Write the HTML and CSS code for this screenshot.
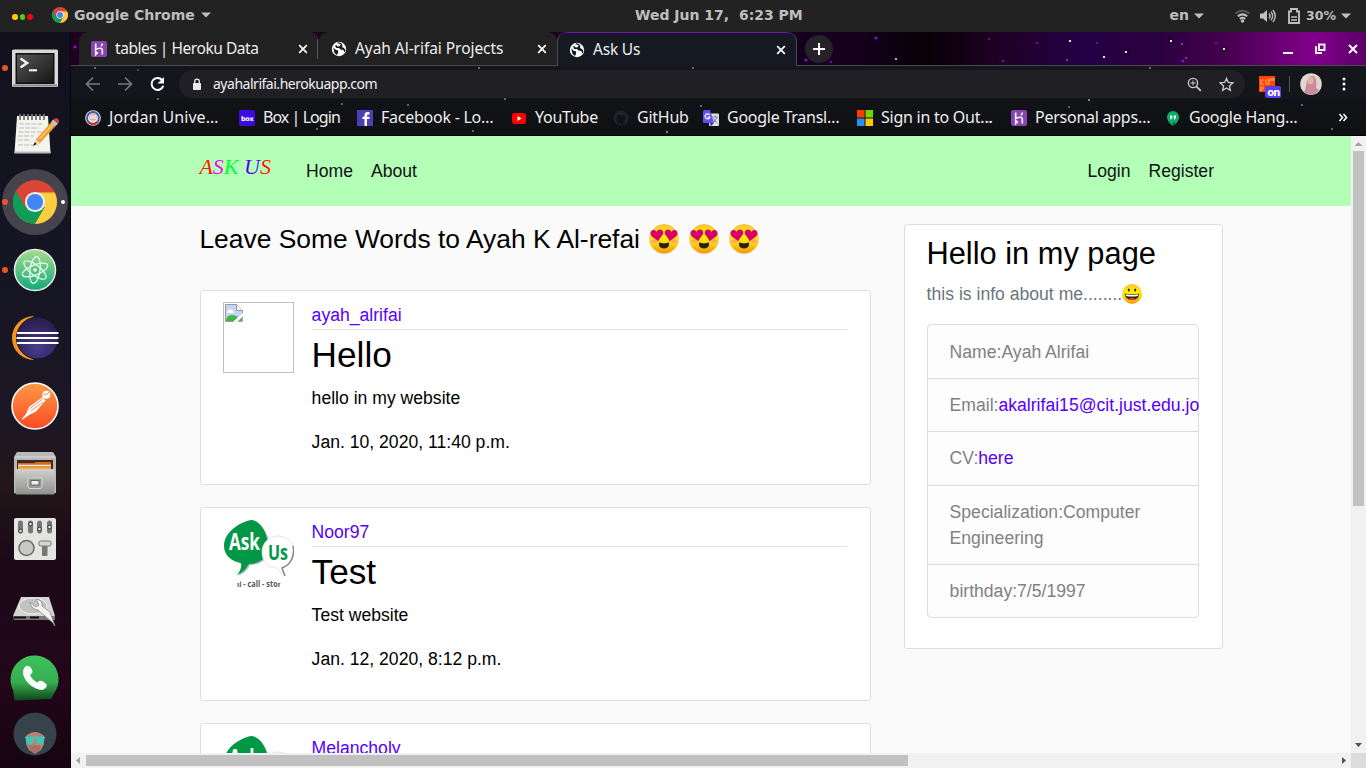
FILE: index.html
```html
<!DOCTYPE html>
<html lang="en">
<head>
<meta charset="utf-8">
<title>Ask Us</title>
<link rel="stylesheet" href="styles.css">
</head>
<body>
<svg class="defs" width="0" height="0" aria-hidden="true">
  <defs>
    <linearGradient id="g-face" x1="0" y1="0" x2="0" y2="1"><stop offset="0" stop-color="#fbc82a"/><stop offset=".4" stop-color="#fff000"/><stop offset=".65" stop-color="#fdd60a"/><stop offset="1" stop-color="#f49410"/></linearGradient>
    <linearGradient id="g-metal" x1="0" y1="0" x2="0" y2="1"><stop offset="0" stop-color="#d0d0ce"/><stop offset="1" stop-color="#8f8f8d"/></linearGradient>
    <linearGradient id="g-screen" x1="0" y1="0" x2="1" y2="1"><stop offset="0" stop-color="#575757"/><stop offset="1" stop-color="#151515"/></linearGradient>
    <linearGradient id="g-atom" x1="0" y1="0" x2="0" y2="1"><stop offset="0" stop-color="#a9dc8f"/><stop offset="1" stop-color="#12a87a"/></linearGradient>
    <linearGradient id="g-post" x1="0" y1="0" x2="0" y2="1"><stop offset="0" stop-color="#ff9a45"/><stop offset="1" stop-color="#fb4a25"/></linearGradient>
    <linearGradient id="g-phone" x1="0" y1="0" x2="0" y2="1"><stop offset="0" stop-color="#3fc25c"/><stop offset=".6" stop-color="#35ad50"/><stop offset="1" stop-color="#10451c"/></linearGradient>
    <radialGradient id="g-ecl" cx=".5" cy=".7" r=".6"><stop offset="0" stop-color="#4b3d91"/><stop offset="1" stop-color="#2a2052"/></radialGradient>
    <symbol id="chrome" viewBox="0 0 48 48">
      <circle cx="24" cy="24" r="24" fill="#db4437"/>
      <path d="M3.200 12 13.600 30 24 24l10.400 6L24 48A24 24 0 0 1 3.200 12z" fill="#0f9d58"/>
      <path d="M24 13.500h21.500A24 24 0 0 1 24 48l10.400-18z" fill="#ffcd40"/>
      <circle cx="24" cy="24" r="11" fill="#f1f1f1"/><circle cx="24" cy="24" r="8.800" fill="#4285f4"/>
    </symbol>
    <symbol id="globe" viewBox="0 0 16 16">
      <circle cx="8" cy="8" r="7.200" fill="#fff"/>
      <path d="M2.200 6.500 5 9l2 .3.200 2.200L6 14 3.500 12zM7 1l-.8 2.600-2 1L5 7h3l1.500 1.500L12 9l1.500 2.400L14.500 9 13 7l-2-1 .5-2L10 2z" fill="#171a20"/>
      <path d="M6.500 2 10 3.500 8 5.600 5.500 5zM9.500 9.500l3.500 0-1 3-2.500 1z" fill="#fff"/>
    </symbol>
    <symbol id="heroku" viewBox="0 0 16 16">
      <rect width="16" height="16" rx="2" fill="#8746ad"/>
      <path d="M4.700 2.500v6Q8 7 10 7.300q1.300.3 1.300 1.800v4.400M11.300 2.500q0 1.500-1.200 2.700M4.700 10.600v3l1.600-1.500z" fill="none" stroke="#eee" stroke-width="1.700"/>
    </symbol>
    <symbol id="close" viewBox="0 0 10 10"><path d="M1.200 1.200l7.600 7.600M8.800 1.200 1.200 8.800" stroke="#fff" stroke-width="1.700"/></symbol>
    <symbol id="down" viewBox="0 0 10 6"><path d="M0 .5h10L5 5.500z" fill="#bebebe"/></symbol>
    <symbol id="hearteyes" viewBox="0 0 30 30">
      <circle cx="15" cy="15" r="14.400" fill="url(#g-face)" stroke="#e8b040" stroke-width=".6"/>
      <ellipse cx="5.500" cy="17" rx="3.200" ry="2" fill="#ffab66"/><ellipse cx="24.500" cy="17" rx="3.200" ry="2" fill="#ffab66"/>
      <path id="hrt" d="M9.300 17.200C5.500 14 1.500 12.700 1.500 9 1.500 5.700 6 5 7.600 8 8.600 4.800 13.800 4.600 14.200 8.300 14.500 11.500 11 13 9.300 17.200z" fill="#d5006c"/>
      <use href="#hrt" transform="matrix(-1 0 0 1 30 0)"/>
      <path d="M10 18.600q5 1.600 10 0 .8 5.900-5 5.900t-5-5.900z" fill="#2b211c"/>
    </symbol>
    <symbol id="askus" viewBox="0 0 71 71">
      <path d="M28 1C17 3 2 13 1.500 27 2 37 10 42 18 44c1 5-1 8-4 12 7-3 10-7 12-11 11 0 20-7 20-17C46 15 37 1 28 1z" fill="#8b8b8b" opacity=".6" transform="translate(1 1)"/>
      <path d="M28 1C17 3 1 13 1 27c0 10 8 15 17 17 1 4-1 8-4 12 7-3 9-7 12-11 11 0 19-7 19-17C45 14 37 1 28 1z" fill="#009846"/>
      <path d="M55 17c9 0 16 7 16 16 0 8-5 14-12 16 0 3 1 5 3 8-4-2-6-5-8-8-9 0-15-7-15-16s7-16 16-16z" fill="#fff" stroke="#ddd" stroke-width=".8"/>
      <path d="M70 27c2 9-2 19-11 22l3 8" fill="none" stroke="#888" stroke-width="1.500"/>
      <text x="6" y="31" textLength="31" lengthAdjust="spacingAndGlyphs" class="logo-word" font-size="23" fill="#fff">Ask</text>
      <text x="45" y="41" textLength="20" lengthAdjust="spacingAndGlyphs" class="logo-word" font-size="22" fill="#009846">Us</text>
      <text x="14" y="68" textLength="44" lengthAdjust="spacingAndGlyphs" class="logo-word" font-size="8.500" fill="#555">ıl - call - stor</text>
      <path d="M10 60h10l-4 4h-6zM60 60H50l4 4h6z" fill="#fff"/>
    </symbol>
  </defs>
</svg>
<div class="desktop">
  <header class="topbar">
    <div class="dots"><i class="dot y"></i><i class="dot g"></i><i class="dot r"></i></div>
    <div class="app"><svg width="16" height="16"><use href="#chrome"/></svg><span>Google Chrome</span><svg width="10" height="6"><use href="#down"/></svg></div>
    <div class="clock">Wed Jun 17,&nbsp; 6:23 PM</div>
    <div class="status">
      <span class="lang">en</span><svg class="lang-arrow" width="10" height="6"><use href="#down"/></svg>
      <svg class="wifi" width="15" height="14" viewBox="0 0 15 14"><g fill="none" stroke="#bebebe" stroke-width="2"><path d="M.5 4.500q7-5.500 14 0" opacity=".35"/><path d="M2.800 7.300q4.700-3.800 9.400 0"/><path d="M4.800 9.900q2.700-2.200 5.400 0"/></g><circle cx="7.500" cy="12" r="1.800" fill="#bebebe"/></svg>
      <svg class="vol" width="16" height="14" viewBox="0 0 16 14"><path d="M0 4.500h3L7 1v12L3 9.500H0z" fill="#bebebe"/><path d="M9 4.500q2 2.500 0 5M11 2.700q3.200 4.300 0 8.600M13 1q4.500 6 0 12" fill="none" stroke="#bebebe" stroke-width="1.400"/></svg>
      <svg class="bat" width="12" height="16" viewBox="0 0 12 16"><path d="M1 3.500h2V1h6v2.500h2V15H1z" fill="none" stroke="#bebebe" stroke-width="1.900"/><path d="M3 9h6M3 12h6" stroke="#bebebe" stroke-width="1.700"/></svg>
      <span class="pct">30%</span><svg width="10" height="6"><use href="#down"/></svg>
    </div>
  </header>
  <div class="work">
    <aside class="dock">
      <div class="slot first"><i class="run"></i><svg width="70" height="68"><rect x="12" y="15.500" width="46" height="37.500" rx="1.500" fill="#d9d9d7"/><path d="M13 51.500h44" stroke="#888" stroke-width="2"/><rect x="15.500" y="19" width="39" height="31" fill="#111"/><rect x="17" y="20.500" width="36" height="28" fill="url(#g-screen)"/><path d="M20.500 24.500l6.500 4.500-6.500 4.500" fill="none" stroke="#eee" stroke-width="2.600"/><path d="M29 36.300h8" stroke="#fff" stroke-width="2"/></svg></div>
      <div class="slot"><svg width="70" height="68"><path d="M17 16h31l2.500 37h-36z" fill="#f4f4ef"/><path d="M14.500 52.500h36" stroke="#bbb" stroke-width="2"/><path d="M20 14v6M24 14v6M28 14v6M32 14v6M36 14v6M40 14v6M44 14v6" stroke="#777" stroke-width="1.800"/><path d="M19 24h24M19 28h20M18.500 32h24M18 36h16M18 40h12M18 45h20" stroke="#bbb" stroke-dasharray="5 1.200"/><path d="M34 45.500l2-6L53 20l4.500 4L40 43z" fill="#f29b2e"/><path d="M36 39.500l4 3.500-6.500 3z" fill="#f5dcae"/><path d="M35 42l1.500 2-3.500 2z" fill="#111"/><path d="M39 39.500 55 22" stroke="#ffce7a" stroke-width="1.300"/><path d="M51 22l2.500-2.500 4.500 4-2.500 2.500z" fill="#b5c4ca"/><path d="M53.500 19.500q3-3 5 0 1.500 2-.5 4z" fill="#d93a43"/></svg></div>
      <div class="slot"><i class="run"></i><svg width="70" height="68"><circle cx="35" cy="34" r="33" fill="#45444d"/><use href="#chrome" x="13" y="12" width="44" height="44"/><circle cx="63" cy="34" r="2" fill="#fff"/></svg></div>
      <div class="slot"><i class="run"></i><svg width="70" height="68"><circle cx="35" cy="34" r="20.500" fill="url(#g-atom)" stroke="#e6eee8" stroke-width="1.500"/><g fill="none" stroke="#e7fff0" stroke-width="1.200"><ellipse cx="35" cy="34" rx="13.500" ry="5" transform="rotate(-22 35 34)"/><ellipse cx="35" cy="34" rx="13.500" ry="5" transform="rotate(38 35 34)"/><ellipse cx="35" cy="34" rx="13.500" ry="5" transform="rotate(98 35 34)"/></g><circle cx="35" cy="34" r="1.800" fill="#e7fff0"/></svg></div>
      <div class="slot"><svg width="70" height="68"><path d="M34 12a22 22 0 1 0 0 44 28 28 0 0 1 0-44z" fill="#f7941e"/><circle cx="37.500" cy="34" r="21" fill="url(#g-ecl)" stroke="#14102c"/><path d="M17 29h41.500M16.500 34h42M17 39h41.500" stroke="#fff" stroke-width="2.200"/></svg></div>
      <div class="slot"><svg width="70" height="68"><circle cx="35" cy="34" r="23" fill="url(#g-post)" stroke="#fff" stroke-width="1.600"/><circle cx="46.300" cy="22.700" r="4" fill="#fff"/><path d="M42.500 25 45.500 28.500 36 39.500l-7 3.500-5 3.500-2 1.500v-1.500L26 42l3-7z" fill="#fff"/><path d="M29.500 37l13-10M31 39l12-9M43 21.500l3 1.500 3-3" stroke="#fb7036" stroke-width=".8" fill="none"/></svg></div>
      <div class="slot"><svg width="70" height="68"><path d="M17 12h36l3 5v36H14V17z" fill="#b9b9b7"/><path d="M15 17h40" stroke="#ddd"/><rect x="17" y="20" width="36" height="12" fill="#3a2a23"/><path d="M18 23h16l2-1h15v10H18z" fill="#d26a1e"/><path d="M18 25.500h33" stroke="#fff3e0" stroke-width="1.500"/><path d="M18 28h33" stroke="#f6a23e" stroke-width="2"/><rect x="15.500" y="29" width="39" height="25.500" rx="1" fill="url(#g-metal)"/><rect x="28" y="38" width="14" height="10.500" rx="2" fill="#999" stroke="#d8d8d8"/><rect x="31" y="40.500" width="8" height="4.500" fill="#eee" stroke="#666"/></svg></div>
      <div class="slot settings"><svg width="70" height="68"><rect x="14" y="12" width="42" height="42" rx="2" fill="#e4e5e1"/><g stroke="#777" stroke-width="5" stroke-linecap="round"><path d="M20.500 17v8M30.500 17v8M39.500 17v8M49.500 17v8"/></g><g fill="#e8e8e8" stroke="#333"><circle cx="20.500" cy="25" r="1.800"/><circle cx="30.500" cy="18" r="1.800"/><circle cx="39.500" cy="23" r="1.800"/><circle cx="49.500" cy="21" r="1.800"/></g><circle cx="26.500" cy="42" r="7.500" fill="#c8c9c5" stroke="#6c6e6a" stroke-width="1.600"/><rect x="42" y="35" width="5.500" height="15" rx="1" fill="#777"/><rect x="39" y="35" width="12" height="5" rx="1.500" fill="#d5d5d2" stroke="#777"/></svg></div>
      <div class="slot"><svg width="70" height="68"><path d="M21 21h28l6 19H13z" fill="#d4d4d2"/><path d="M13 40h42v4H14z" fill="#777"/><path d="M14 41.500h25" stroke="#111" stroke-dasharray="12 4" stroke-width="2"/><ellipse cx="33" cy="30" rx="14" ry="8" fill="#c2c2c0" stroke="#efefef"/><path d="M30 26q2 8 8 8l14 12 3 4-5-14-8-6q1-6-6-7l3 6-3 2z" fill="#f4f4f3" stroke="#888" stroke-width=".8"/></svg></div>
      <div class="slot"><svg width="70" height="68"><path d="M14.500 56.500 13 46a24 24 0 1 1 41 3.500l-3 5.500z" fill="url(#g-phone)"/><path d="M25.500 22.500c2-1.500 4-.5 5.500 1.500 2.500 4 1.500 5-1 7 2 4 4.500 6 7.500 7.500 2-2.500 4-2 7 0 2.500 1.500 3 3 1.500 5-3 4.500-9 2-14.500-1.500-6-4.500-12-14-6-19.500z" fill="#fff"/></svg></div>
      <div class="slot user"><svg width="70" height="44"><circle cx="35" cy="22" r="21.500" fill="#37434a"/><path d="M26 24q9-8 18 0v8l-3 6-6 4-6-4-3-6z" fill="#b58376"/><path d="M29 33q6 1 12 0l-1 5-5 4-5-4z" fill="#a77167"/><path d="M25 25.500h20" stroke="#4ecdbb" stroke-width="1.500"/><path d="M25.500 25H34v3q-1 5-5 4.500-3.500-.5-3.500-7.500zM44.500 25H36v3q1 5 5 4.500 3.500-.5 3.500-7.500z" fill="#3cc8b4"/></svg></div>
    </aside>
    <main class="browser">
      <div class="chrome-ui">
        <svg class="stars" width="1295" height="104" aria-hidden="true">
          <g fill="#7c7c98"><circle cx="24" cy="36" r="1"/><circle cx="134" cy="28" r="1"/><circle cx="67" cy="38" r=".8"/><circle cx="87" cy="67" r="1"/><circle cx="271" cy="72" r="1"/><circle cx="408" cy="36" r="1"/><circle cx="434" cy="67" r="1"/><circle cx="622" cy="36" r="1"/><circle cx="337" cy="73" r="1"/><circle cx="402" cy="99" r="1"/><circle cx="596" cy="100" r="1.200"/><circle cx="630" cy="74" r="1"/><circle cx="1018" cy="68" r="1.200"/><circle cx="1079" cy="36" r="1"/><circle cx="998" cy="75" r="1"/><circle cx="1148" cy="93" r="1.200"/><circle cx="1231" cy="73" r="1"/><circle cx="1261" cy="97" r="1"/><circle cx="918" cy="90" r="1"/><circle cx="246" cy="97" r="1"/></g>
        </svg>
        <div class="tabs">
          <svg class="stars" width="1295" height="33" aria-hidden="true">
            <g fill="#a900e8"><circle cx="4" cy="15" r="1.500"/><circle cx="735" cy="28" r="1.300"/><circle cx="760" cy="30" r="1"/><circle cx="805" cy="6" r="1.300"/><circle cx="932" cy="29" r="1"/><circle cx="966" cy="11" r="1"/><circle cx="1112" cy="29" r="1.300"/></g>
            <g fill="#f0c4ff" stroke="#160018" stroke-width="1.400"><circle cx="825" cy="27" r="1.800"/><circle cx="999" cy="9" r="2"/><circle cx="1033" cy="25" r="2"/><circle cx="1055" cy="20" r="2"/><circle cx="1100" cy="9" r="2"/><circle cx="1153" cy="17" r="2"/></g>
            <g fill="#c33aac"><circle cx="918" cy="7" r=".8"/><circle cx="996" cy="28" r="1"/><circle cx="1026" cy="11" r=".8"/><circle cx="1111" cy="12" r="1"/><circle cx="1115" cy="26" r="1"/><circle cx="1145" cy="11" r=".8"/></g>
          </svg>
          <div class="tab"><svg width="16" height="16"><use href="#heroku"/></svg><span class="t1">tables | Heroku Data</span><svg class="x" width="10" height="10"><use href="#close"/></svg></div>
          <div class="tab second"><svg width="16" height="16"><use href="#globe"/></svg><span class="t2">Ayah Al-rifai Projects</span><svg class="x" width="10" height="10"><use href="#close"/></svg></div>
          <div class="tab active"><svg width="16" height="16"><use href="#globe"/></svg><span class="t3">Ask Us</span><svg class="x" width="10" height="10"><use href="#close"/></svg></div>
          <div class="newtab"><svg width="28" height="28"><circle cx="14" cy="14" r="14" fill="#252329"/><path d="M14 8v12M8 14h12" stroke="#fff" stroke-width="2"/></svg></div>
          <div class="wm"><svg width="90" height="34"><path d="M2 21h10" stroke="#fff" stroke-width="2"/><path d="M38 12.500h5.500v5.500H38zM35 14v7h6" fill="none" stroke="#eee" stroke-width="2"/><path d="M68 13l8 8M76 13l-8 8" stroke="#fff" stroke-width="2"/></svg></div>
        </div>
        <div class="toolbar">
          <svg class="nav" width="86" height="28"><g fill="none" stroke="#77797c" stroke-width="1.700"><path d="M15 14H2M8 7.500 1.500 14 8 20.500M33 14h13M40 7.500l6.500 6.500-6.500 6.500"/></g><path d="M77 9.800a6 6 0 1 0 1.300 6" fill="none" stroke="#fff" stroke-width="2"/><path d="M79 7v6.500h-6.500z" fill="#fff"/></svg>
          <div class="omni">
            <svg width="10" height="13" viewBox="0 0 10 13"><rect x="1" y="5" width="8" height="7" rx=".8" fill="#e8eaed"/><path d="M2.700 5V3.500a2.300 2.300 0 0 1 4.600 0V5" fill="none" stroke="#e8eaed" stroke-width="1.300"/></svg>
            <span class="url">ayahalrifai.herokuapp.com</span>
            <svg class="mag" width="15" height="15" viewBox="0 0 15 15"><circle cx="6" cy="6" r="4.600" fill="none" stroke="#c9cbce" stroke-width="1.400"/><path d="M9.300 9.300l4.500 4.500" stroke="#c9cbce" stroke-width="1.800"/><path d="M3.500 6h5M6 3.500v5" stroke="#c9cbce"/></svg>
            <svg width="15" height="15" viewBox="0 0 15 15"><path d="M7.500 1.400 9.300 5.500l4.500.4-3.400 3 1 4.400-3.900-2.300-3.900 2.300 1-4.400-3.400-3 4.500-.4z" fill="none" stroke="#c9cbce" stroke-width="1.300"/></svg>
          </div>
          <div class="ext"><svg width="23" height="24"><rect width="16" height="16" fill="#ff4500"/><path d="M5 4H2v4h3M7 4h3v4H7zM11 2v3M13 2v3M15 2v3M2 15v-4h3M2 13h3" fill="none" stroke="#ffa05c" stroke-width="1.200"/><rect x="6" y="10" width="16" height="12" rx="2" fill="#5b3cf4"/><text x="8.300" y="19.500" class="badge">on</text></svg></div>
          <i class="sep"></i>
          <svg class="ava" width="22" height="22"><circle cx="11" cy="11" r="10.800" fill="#ddd7cd"/><path d="M4 19c3-3 1-13 7-16 6-1 6 8 5 12l3 2q-3 4-8 4.800-5 0-7-2.800z" fill="#c98c9d"/><ellipse cx="10.500" cy="7.500" rx="3" ry="3.700" fill="#e5b4a5"/></svg>
          <svg class="more" width="4" height="14"><circle cx="2" cy="2" r="1.500" fill="#fff"/><circle cx="2" cy="7" r="1.500" fill="#fff"/><circle cx="2" cy="12" r="1.500" fill="#fff"/></svg>
        </div>
        <div class="bookmarks">
          <div class="bm w154"><svg width="16" height="16"><circle cx="8" cy="8" r="7.800" fill="#e4e6ee"/><circle cx="8" cy="8" r="6" fill="none" stroke="#365ca8" stroke-width="1.800"/><circle cx="8" cy="7" r="3.800" fill="#e9a49b"/><path d="M5 6h6M5 8h6" stroke="#fff"/><path d="M3 12q5 4 10 0" stroke="#c33" stroke-width="2" fill="none"/></svg><span class="wide">Jordan Unive…</span></div>
          <div class="bm w118"><svg width="16" height="16"><rect width="16" height="16" rx="1.500" fill="#3b0be0"/><text x="2" y="10.500" class="boxlogo">box</text></svg><span class="tight">Box | Login</span></div>
          <div class="bm w154"><svg width="16" height="16"><rect width="16" height="16" fill="#4b3fb5"/><path d="M10 16V9h2.500V6.800H10V5.500q0-1.200 2.500-1V2.200Q7.500 1.400 7.500 5v1.800H5.500V9h2v7z" fill="#fff"/></svg><span>Facebook - Lo…</span></div>
          <div class="bm w102"><svg width="16" height="16"><rect x="1" y="3" width="14" height="11" rx="2.500" fill="#f00"/><path d="M6.500 6v5l4-2.500z" fill="#fff"/></svg><span>YouTube</span></div>
          <div class="bm w90"><svg width="16" height="16"><circle cx="8" cy="8" r="7.500" fill="#20232b"/><path d="M6 15.500v-3q-2 0-2.500-1.500M10 15.500v-3q2.500-1 2.500-4 0-1.500-.8-2.300L11.500 4 9.500 5h-3l-2-1-.2 2.200Q3.500 7 3.500 8.500q0 3 2.500 4z" fill="#111318"/></svg><span>GitHub</span></div>
          <div class="bm w154"><svg width="16" height="16"><rect x="6" y="3.500" width="10" height="12.500" rx="1" fill="#dfe1e6"/><path d="M9 7h6M12 5.500V7M14 7q-1 4-4 6M10.500 8.500q1 3 4 4.500" stroke="#789" fill="none"/><path d="M0 1.500Q0 0 1.500 0H7l4 13H1.500Q0 13 0 11.500z" fill="#5f4fee"/><path d="M11 13l-3 3-1-3z" fill="#3a24a8"/><path d="M6.700 5A2.500 2.500 0 1 0 7 7H4.500" stroke="#fff" fill="none" stroke-width="1.200"/></svg><span>Google Transl…</span></div>
          <div class="bm w154"><svg width="16" height="16"><path d="M0 0h7.500v7.500H0z" fill="#ff3d00"/><path d="M8.500 0H16v7.500H8.500z" fill="#76d600"/><path d="M0 8.500h7.500V16H0z" fill="#2a8df5"/><path d="M8.500 8.500H16V16H8.500z" fill="#ffc800"/></svg><span>Sign in to Out…</span></div>
          <div class="bm w154"><svg width="16" height="16"><use href="#heroku"/></svg><span>Personal apps…</span></div>
          <div class="bm w154"><svg width="16" height="16"><path d="M8 1a6 6 0 0 1 0 12v3q-6-4-6-9a6 6 0 0 1 6-6z" fill="#0cac6b"/><path d="M10 12.500 14 7q0 5-6 9z" fill="#0cac6b"/><path d="M5 5.500h2.300V8L6 9.500H5L5.700 8H5zM8.700 5.500H11V8L9.700 9.500h-1L9.400 8h-.7z" fill="#eafff5"/></svg><span>Google Hang…</span></div>
          <svg class="chev" width="10" height="9"><path d="M1.500 1 4.500 4.500l-3 3.500M5.500 1l3 3.500-3 3.500" fill="none" stroke="#fff" stroke-width="1.600"/></svg>
        </div>
      </div>
      <div class="view">
        <div class="page">
          <nav class="site-nav">
            <a class="brand"><b class="c1">A</b><b class="c2">S</b><b class="c3">K</b> <b class="c4">U</b><b class="c1">S</b></a>
            <a class="link">Home</a><a class="link">About</a>
            <a class="link right">Login</a><a class="link">Register</a>
          </nav>
          <div class="cols">
            <section class="posts">
              <h1>Leave Some Words to Ayah K Al-refai <svg class="em e1" width="30" height="30"><use href="#hearteyes"/></svg><svg class="em" width="30" height="30"><use href="#hearteyes"/></svg><svg class="em" width="30" height="30"><use href="#hearteyes"/></svg></h1>
              <article>
                <div class="pic broken"><svg width="18" height="18" viewBox="0 0 18 18"><path d="M.5.500h11l6 6v5L11 17.500H.5z" fill="#c5d5f7" stroke="#999"/><path d="M11.500.500v6h6" fill="#fff" stroke="#999"/><path d="M2 8q2-4 5-2 2 1 2 3H2z" fill="#fff"/><path d="M1 17q0-6 6-6 3 0 6 2l-4 4z" fill="#42b53e"/><path d="M8 18 18 9v3l-6 6z" fill="#fff"/><path d="M13 17.500h4.500V13z" fill="#42b53e" stroke="#999" stroke-width=".6"/></svg></div>
                <div class="body"><div class="meta"><a>ayah_alrifai</a></div><h2>Hello</h2><p>hello in my website</p><p>Jan. 10, 2020, 11:40 p.m.</p></div>
              </article>
              <article>
                <svg class="pic" width="71" height="71"><use href="#askus"/></svg>
                <div class="body"><div class="meta"><a>Noor97</a></div><h2>Test</h2><p>Test website</p><p>Jan. 12, 2020, 8:12 p.m.</p></div>
              </article>
              <article>
                <svg class="pic" width="71" height="71"><use href="#askus"/></svg>
                <div class="body"><div class="meta"><a>Melancholy</a></div></div>
              </article>
            </section>
            <aside class="info">
              <h3>Hello in my page</h3>
              <p class="muted">this is info about me........<svg class="grin" width="20" height="20" viewBox="0 0 20 20"><circle cx="10" cy="10" r="9.700" fill="url(#g-face)" stroke="#e8b82b" stroke-width=".5"/><ellipse cx="6.800" cy="6" rx="1" ry="1.600" fill="#30210f"/><ellipse cx="13.200" cy="6" rx="1" ry="1.600" fill="#30210f"/><path d="M2.800 9.500q7.200 2 14.400 0Q17 16 10 16T2.800 9.500z" fill="#30210f"/><path d="M3.500 10.200q6.500 1.600 13 0l-.6 1.700q-5.900 1.200-11.800 0z" fill="#fff"/><path d="M6.500 15q3.500-2 7 0-3.500 1.700-7 0z" fill="#f04444"/></svg></p>
              <ul>
                <li>Name:Ayah Alrifai</li>
                <li>Email:<a>akalrifai15@cit.just.edu.jo</a></li>
                <li>CV:<a>here</a></li>
                <li>Specialization:Computer Engineering</li>
                <li>birthday:7/5/1997</li>
              </ul>
            </aside>
          </div>
        </div>
        <div class="vbar"><svg width="15" height="15"><path d="M3.500 10h8l-4-4z" fill="#a3a3a3"/></svg><i></i><svg class="end" width="15" height="15"><path d="M4 5h7l-3.500 4z" fill="#505050"/></svg></div>
        <div class="hbar"><svg width="15" height="15"><path d="M9 4v7L5 7.500z" fill="#a3a3a3"/></svg><i></i><svg class="end" width="15" height="15"><path d="M6 4v7l4-3.500z" fill="#505050"/></svg></div>
        <div class="corner"></div>
      </div>
    </main>
  </div>
</div>
</body>
</html>
```
FILE: styles.css
```css
* { box-sizing: border-box; }
body { margin: 0; overflow: hidden; font-family: "Liberation Sans", Arial, sans-serif; }
svg { display: block; flex: none; }
.defs { position: absolute; }
.desktop { width: 1366px; height: 768px; display: flex; flex-direction: column; overflow: hidden; background: #111; }

.topbar { height: 32px; flex: none; background: #222; color: #bebebe; display: grid; grid-template-columns: 52px 583px auto 1fr; align-items: center; font: bold 14px "DejaVu Sans", sans-serif; padding-bottom: 2px; }
.dots { display: flex; gap: 2px; padding: 4px 0 0 12px; }
.dot { width: 5.500px; height: 5.500px; border-radius: 50%; }
.dot.y { background: #fc0; } .dot.g { background: #4fd000; } .dot.r { background: #f00; }
.app { display: flex; align-items: center; gap: 6px; white-space: nowrap; }
.clock { white-space: nowrap; }
.status { display: flex; align-items: center; justify-content: flex-end; padding-right: 15px; }
.status svg { margin-top: 1px; }
.status .lang-arrow { margin: 1px 31px 0 5px; }
.status .vol { margin: 1px 12px 0 10px; }
.pct { font-size: 12.500px; margin: 1px 5px 0 6px; }

.work { flex: 1; display: flex; min-height: 0; }
.dock { width: 71px; flex: none; padding-top: 2px; background: linear-gradient(#12101c 0, #151523 220px, #1c1724 390px, #221619 450px, #1b0917 530px, #22061a 650px, #160410 100%); border-right: 1px solid #08060c; }
.slot { height: 68px; position: relative; }
.slot.first { height: 66px; }
.slot.settings { height: 66px; margin: -2px 0 4px; }
.slot.user { height: 44px; }
.run { position: absolute; left: 2px; top: 31px; width: 6px; height: 6px; border-radius: 50%; background: #e95420; z-index: 1; }

.browser { flex: 1; display: flex; flex-direction: column; min-width: 0; }
.chrome-ui { height: 104px; flex: none; position: relative; background: linear-gradient(#15161b 0, #14161b 66px, #111317 67px, #0f1013 100%); border-bottom: 1px solid #000; color: #eee; font-family: "Noto Sans", sans-serif; }
.stars { position: absolute; left: 0; top: 0; }
.tabs { position: relative; height: 34px; display: flex; padding-left: 8px; border-bottom: 1px solid #4a4a4d; background: linear-gradient(90deg, #200020 0, #14001c 55%, #17001e 60%, #070007 66%, #210026 72%, #230045 78%, #2b0040 84%, #44004e 89%, #82008c 96%, #5a0068 100%); }
.tab { position: relative; width: 240px; padding: 0 11px 0 12px; display: flex; align-items: center; gap: 8px; font-size: 15.500px; white-space: nowrap; background: #212121; border-radius: 9px 9px 0 0; }
.tab:first-of-type::after { content: ""; position: absolute; right: 1px; top: 7px; height: 20px; width: 1px; background: #55555a; }
.tab.second { width: 238px; padding-right: 10px; border-right: 0; }
.tab.active { width: 240px; height: 34px; padding: 0 10px 0 11px; background: #151a22; border: 1px solid #4a4a4d; border-top-color: #5c129c; border-bottom: 0; }
.tab.active::before { content: ""; position: absolute; left: 10px; right: 10px; top: -1px; height: 1px; background: #7a10c0; }
.tab .x { margin-left: auto; }
.tab span { margin-top: -1px; }
.t1 { letter-spacing: -.45px; }
.t2 { letter-spacing: -.05px; }
.t3 { letter-spacing: -.2px; }
.newtab { position: relative; padding: 3px 0 0 8px; }
.wm { position: relative; margin-left: auto; }
.wm svg { margin-right: -5px; }
.toolbar { position: relative; height: 36px; display: flex; align-items: center; }
.nav { margin-left: 14px; }
.omni { width: 1066px; height: 28px; margin-left: 8px; border-radius: 14px; background: #202024; display: flex; align-items: center; padding: 0 11px 0 13px; }
.url { font-size: 14px; margin: -2px 0 0 11px; color: #f1f1f1; letter-spacing: -.48px; }
.mag { margin: 0 17px 0 auto; }
.ext { margin: 7px 0 0 14px; }
.badge { font: bold 10px "DejaVu Sans", sans-serif; fill: #fff; letter-spacing: -.8px; }
.sep { width: 1px; height: 16px; background: #555; margin-left: 7px; }
.ava { margin-left: 10px; }
.more { margin-left: 20px; }
.bookmarks { position: relative; height: 31px; display: flex; align-items: center; padding-left: 14px; }
.bm { display: flex; align-items: center; gap: 8px; font-size: 16px; white-space: nowrap; letter-spacing: -.25px; }
.bm span { margin-top: -2px; }
.bm .wide { letter-spacing: .05px; }
.bm .tight { letter-spacing: -.95px; }
.w154 { width: 154px; } .w118 { width: 118px; } .w102 { width: 102px; } .w90 { width: 90px; }
.boxlogo { font: bold 6.500px "DejaVu Sans", sans-serif; fill: #fff; letter-spacing: -.3px; }
.chev { margin-left: 19px; }

.view { flex: 1; min-height: 0; display: grid; grid-template: 617px 15px / 1280px 15px; }
.page { background: #fafafa; overflow: hidden; font-size: 17.600px; line-height: 26.400px; color: #000; }
.site-nav { height: 70px; background: #b3ffb8; display: flex; align-items: center; padding: 0 137px 0 128.400px; }
.brand { font: italic 22px "Liberation Serif", serif; width: 106.600px; margin-top: -9px; }
.brand b { font-weight: 400; }
.site-nav .link { margin-right: 18px; color: #111; }
.site-nav .right { margin-left: auto; }
.site-nav .link:last-child { margin-right: 0; }
.cols { display: flex; align-items: flex-start; gap: 33px; padding: 18px 128px 0 129px; }
.posts { width: 671px; }
h1, h2, h3, p, ul { margin: 0; font-weight: 400; }
h1 { font-size: 26.400px; line-height: 30px; height: 66px; display: flex; align-items: flex-start; white-space: nowrap; margin-left: -.6px; }
.em { margin-right: 10.300px; }
.e1 { margin-left: 8.600px; }
article, .info { background: #fff; border: 1px solid #ddd; border-radius: 3.300px; padding: 11px 22px; }
article { display: flex; height: 194.700px; margin-bottom: 22px; padding-right: 23px; }
.pic { width: 71px; height: 71px; margin-right: 17.600px; flex: none; }
.logo-word { font-family: "Open Sans", sans-serif; font-weight: 700; }
.broken { border: 1px solid #c0c0c0; padding: 1px; }
.body { flex: 1; }
.meta { border-bottom: 1px solid #e3e3e3; padding-bottom: 1px; margin-bottom: 3.700px; }
a { color: #50f; }
.c1 { color: #ff1a00; } .c2 { color: #f0f; } .c3 { color: #00ff2a; } .c4 { color: #5500f5; }
h2 { font-size: 35.200px; line-height: 42.240px; margin-bottom: 8.800px; }
p { margin-bottom: 17.600px; }
.info { width: 319px; height: 425px; }
h3 { font-size: 30.800px; line-height: 35px; margin: 0 0 10px -.5px; }
.muted { color: #6c757d; display: flex; align-items: center; margin: 0 0 17px -.4px; }
ul { list-style: none; padding: 0; border: 1px solid #ddd; border-radius: 4px; background: #fdfdfd; color: #818182; width: 272px; }
li { padding: 13.200px 21px 12.800px 21.600px; }
li + li { border-top: 1px solid #ddd; }
li:nth-child(4) { line-height: 26px; }

.vbar, .hbar { background: #f1f1f1; display: flex; }
.vbar { flex-direction: column; }
.vbar i { width: 11px; height: 355px; margin-left: 2px; background: #c1c1c1; }
.hbar i { height: 11px; width: 822px; margin-top: 2px; background: #c1c1c1; }
.vbar .end { margin-top: auto; }
.hbar .end { margin-left: auto; }
.corner { background: #dcdcdc; }
```
